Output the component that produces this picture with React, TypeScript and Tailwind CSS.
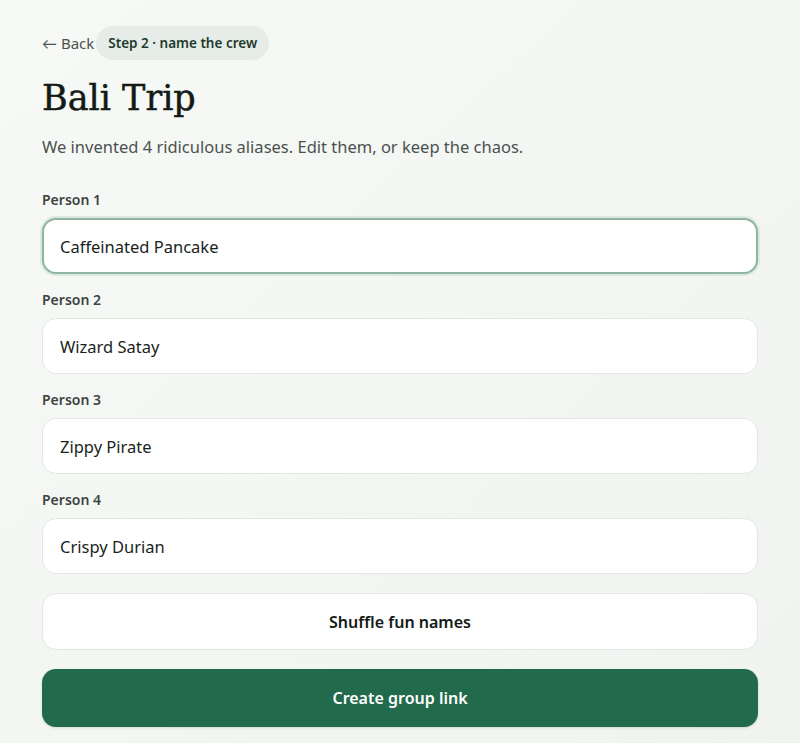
import { useState } from 'react';

const initialNames = ['Caffeinated Pancake', 'Wizard Satay', 'Zippy Pirate', 'Crispy Durian'];

export default function App() {
  const [names, setNames] = useState(initialNames);

  return (
    <div className="min-h-screen bg-gradient-to-br from-[#f7f9f7] to-[#f0f3f0] font-['Noto_Sans','Lato',sans-serif] text-[#1c211e]">
      <div className="px-[42px] pt-[26px] pb-4">
        {/* Header */}
        <div className="flex items-center gap-[2px]">
          <button className="text-[15px] text-[#4b524e]">← Back</button>
          <span className="flex h-[34px] items-center rounded-full bg-[#e6ece8] px-3 text-[13.5px] font-semibold text-[#1f3a2d]">
            Step 2 · name the crew
          </span>
        </div>

        <h1 className="mt-[14px] font-['DejaVu_Serif',serif] text-[35px] leading-[48px] text-[#141a16] [-webkit-text-stroke:0.5px_#141a16]">
          Bali Trip
        </h1>
        <p className="mt-[13px] text-[16.5px] leading-6 text-[#4a524d]">
          We invented 4 ridiculous aliases. Edit them, or keep the chaos.
        </p>

        {/* People */}
        <div className="mt-[31px] flex flex-col gap-4">
          {names.map((name, i) => (
            <div key={i}>
              <label className="block text-[14px] leading-5 font-semibold text-[#3c4440]">Person {i + 1}</label>
              <input
                value={name}
                autoFocus={i === 0}
                onFocus={(e) => {
                  const len = e.target.value.length;
                  e.target.setSelectionRange(len, len);
                }}
                onChange={(e) => setNames(names.map((n, j) => (j === i ? e.target.value : n)))}
                className="mt-2 h-14 w-full rounded-[14px] border border-[#e3e7e4] bg-white px-[17px] text-[16.5px] text-[#1a1f1c] caret-[#1a1f1c] outline-none focus:border-2 focus:border-[#8fb5a2] focus:px-[16px] focus:shadow-[0_0_0_2px_#dce9e2]"
              />
            </div>
          ))}
        </div>

        <button
          onClick={() => setNames([...names].reverse())}
          className="mt-[19px] h-[57px] w-full rounded-[14px] border border-[#e3e7e4] bg-[#fdfefd] text-[16px] font-semibold text-[#141a16]"
        >
          Shuffle fun names
        </button>
        <button className="mt-[19px] h-[58px] w-full rounded-[14px] bg-[#226a4c] text-[16px] font-semibold text-white shadow-sm">
          Create group link
        </button>
      </div>
    </div>
  );
}
